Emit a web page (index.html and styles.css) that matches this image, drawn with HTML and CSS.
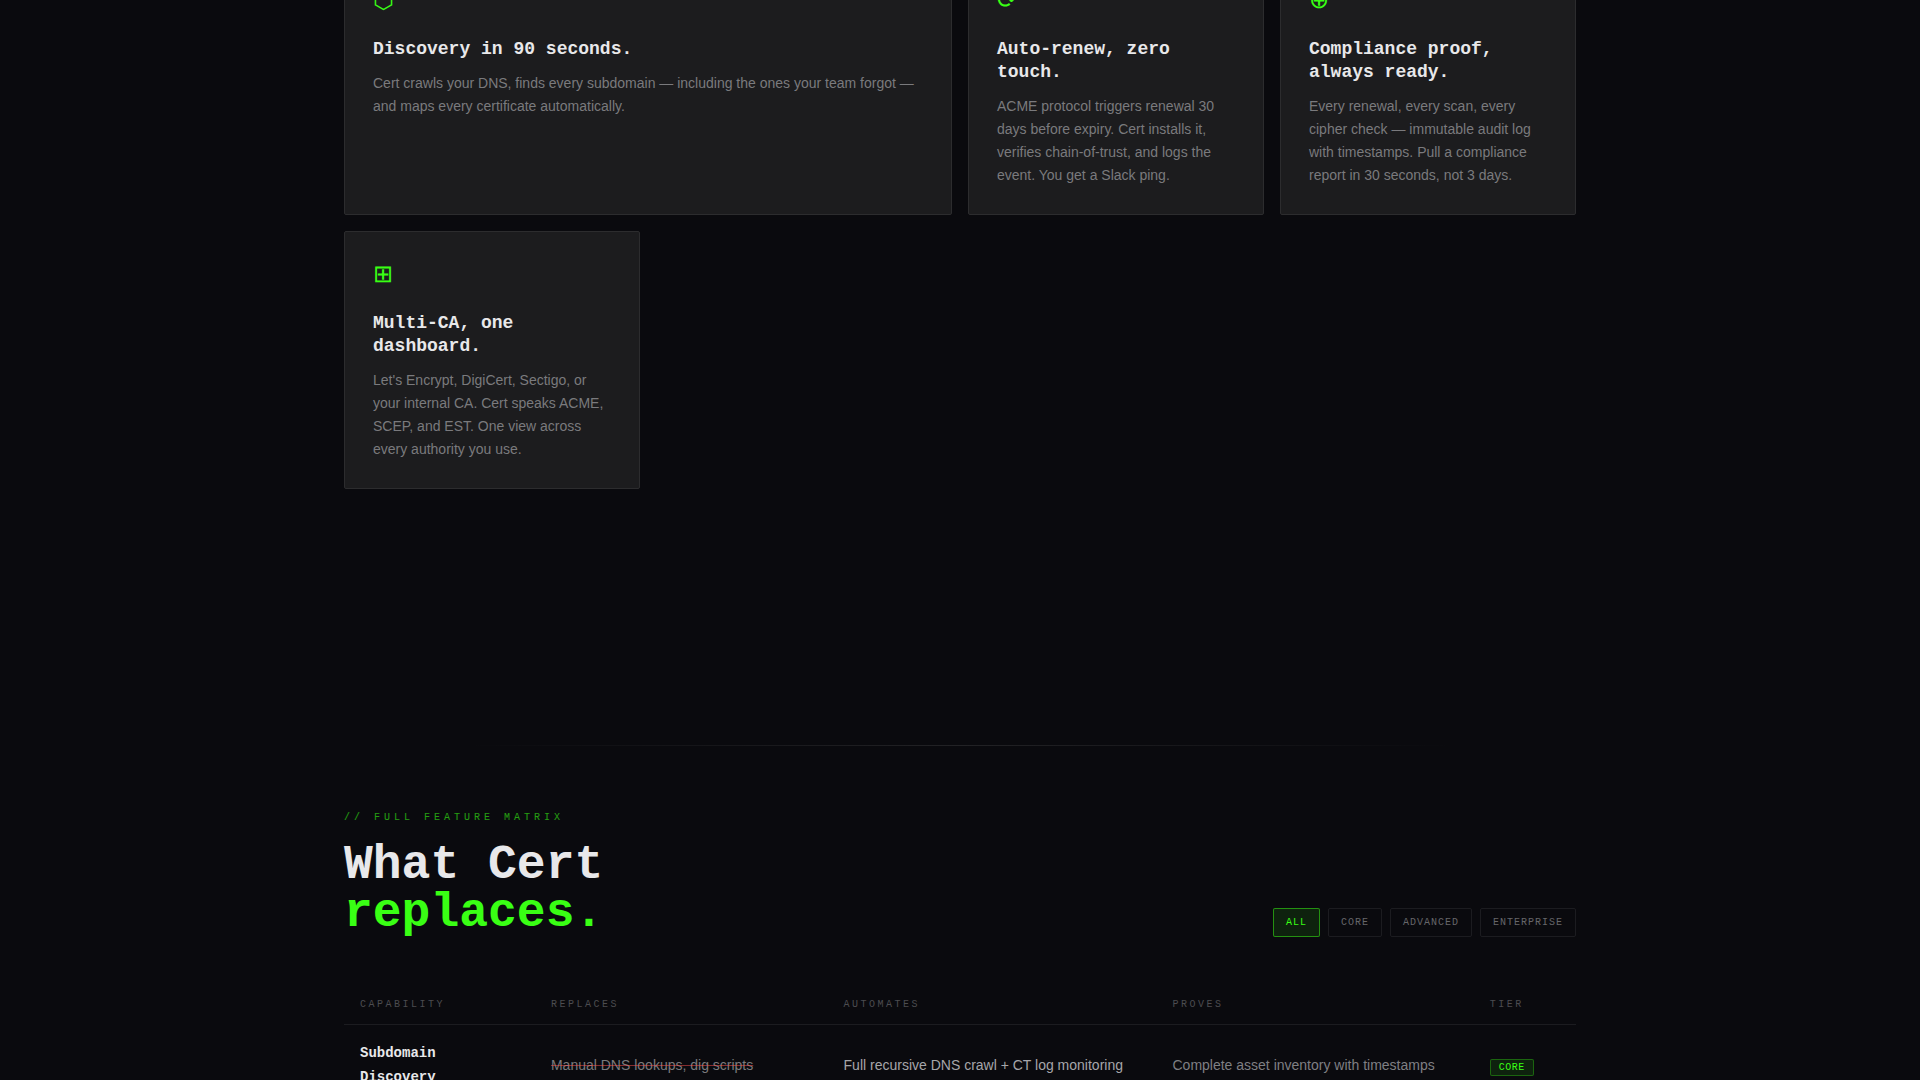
FILE: index.html
```html
<!DOCTYPE html>
<html lang="en">
<head>
  <meta charset="UTF-8">
  <meta name="viewport" content="width=device-width, initial-scale=1.0">
  <title>Cert</title>
  <link rel="stylesheet" href="styles.css">
</head>
<body>
  <section class="container features">
    <div class="bento">
      <article class="card card-wide">
        <div class="card-icon">⬡</div>
        <h3>Discovery in 90 seconds.</h3>
        <p>Cert crawls your DNS, finds every subdomain — including the ones your team forgot — and maps every certificate automatically.</p>
      </article>
      <article class="card">
        <div class="card-icon">⟳</div>
        <h3>Auto-renew, zero touch.</h3>
        <p>ACME protocol triggers renewal 30 days before expiry. Cert installs it, verifies chain-of-trust, and logs the event. You get a Slack ping.</p>
      </article>
      <article class="card">
        <div class="card-icon">⊕</div>
        <h3>Compliance proof, always ready.</h3>
        <p>Every renewal, every scan, every cipher check — immutable audit log with timestamps. Pull a compliance report in 30 seconds, not 3 days.</p>
      </article>
      <article class="card">
        <div class="card-icon">⊞</div>
        <h3>Multi-CA, one dashboard.</h3>
        <p>Let's Encrypt, DigiCert, Sectigo, or your internal CA. Cert speaks ACME, SCEP, and EST. One view across every authority you use.</p>
      </article>
    </div>
  </section>

  <section class="container matrix">
    <div class="divider"></div>
    <p class="label">// FULL FEATURE MATRIX</p>
    <div class="matrix-header">
      <h2>What Cert<br><span class="accent">replaces.</span></h2>
      <div class="filters">
        <button class="filter active" type="button">ALL</button>
        <button class="filter" type="button">CORE</button>
        <button class="filter" type="button">ADVANCED</button>
        <button class="filter" type="button">ENTERPRISE</button>
      </div>
    </div>
    <table>
      <colgroup>
        <col class="col-capability">
        <col class="col-replaces">
        <col class="col-automates">
        <col class="col-proves">
        <col>
      </colgroup>
      <thead>
        <tr>
          <th>CAPABILITY</th>
          <th>REPLACES</th>
          <th>AUTOMATES</th>
          <th>PROVES</th>
          <th>TIER</th>
        </tr>
      </thead>
      <tbody>
        <tr>
          <td class="capability">Subdomain Discovery</td>
          <td class="replaces">Manual DNS lookups, dig scripts</td>
          <td class="automates">Full recursive DNS crawl + CT log monitoring</td>
          <td class="proves">Complete asset inventory with timestamps</td>
          <td><span class="tier">CORE</span></td>
        </tr>
      </tbody>
    </table>
  </section>
</body>
</html>
```

FILE: styles.css
```css
* {
  box-sizing: border-box;
  margin: 0;
  padding: 0;
}
html {
  height: 100%;
  overflow: hidden;
}
body {
  height: 100%;
  overflow: hidden;
  background: #0a0a0e;
  color: #e8e8ea;
  font-family: "Liberation Sans", Arial, sans-serif;
  font-size: 14px;
  line-height: 24px;
}
.container {
  max-width: 1280px;
  margin: 0 auto;
  padding: 0 24px;
}

/* Feature cards */
.features {
  margin-top: -43px;
  padding-bottom: 256px;
}
.bento {
  display: grid;
  grid-template-columns: repeat(4, 1fr);
  gap: 16px;
}
.card {
  padding: 28px 28px 27px;
  background: #1c1c1e;
  border: 1px solid #2c2c2e;
  border-radius: 2px;
}
.card-wide {
  grid-column: span 2;
}
.card-icon {
  margin-bottom: 24px;
  color: #39ff14;
  font-size: 24px;
  line-height: 28px;
}
.card h3 {
  margin-bottom: 11px;
  font-family: "Liberation Mono", monospace;
  font-size: 18px;
  font-weight: 700;
  line-height: 23px;
}
.card p {
  color: #7a7a7d;
  line-height: 23px;
}

/* Feature matrix */
.divider {
  height: 1px;
  margin: 0 10% 64px;
  background: linear-gradient(90deg, transparent, #222225, transparent);
}
.label {
  margin-bottom: 15px;
  color: #39ff14;
  font-family: "Liberation Mono", monospace;
  font-size: 10px;
  letter-spacing: 4px;
  line-height: 16px;
  opacity: 0.6;
}
.matrix-header {
  display: flex;
  justify-content: space-between;
  align-items: flex-end;
  margin-bottom: 48px;
}
.matrix-header h2 {
  font-family: "Liberation Mono", monospace;
  font-size: 48px;
  font-weight: 700;
  line-height: 48px;
}
.accent {
  color: #39ff14;
}
.filters {
  display: flex;
  gap: 8px;
}
.filter {
  padding: 8px 12px;
  background: transparent;
  border: 1px solid #1c1c20;
  border-radius: 2px;
  color: #66666a;
  font-family: "Liberation Mono", monospace;
  font-size: 10px;
  letter-spacing: 1px;
  line-height: 11px;
  cursor: pointer;
}
.filter.active {
  background: rgba(57, 255, 20, 0.1);
  border-color: rgba(57, 255, 20, 0.5);
  color: #39ff14;
}
table {
  width: 100%;
  border-collapse: collapse;
  table-layout: fixed;
}
.col-capability {
  width: 15.5%;
}
.col-replaces {
  width: 23.75%;
}
.col-automates {
  width: 26.7%;
}
.col-proves {
  width: 25.75%;
}
th {
  padding: 12px 16px 11px;
  border-bottom: 1px solid #1c1c20;
  color: #4c4c50;
  font-family: "Liberation Mono", monospace;
  font-size: 10px;
  font-weight: 400;
  letter-spacing: 0.25em;
  line-height: 16px;
  text-align: left;
}
td {
  padding: 16px;
  vertical-align: middle;
}
.capability {
  font-family: "Liberation Mono", monospace;
  font-weight: 700;
}
.replaces {
  color: #7a7a7d;
  text-decoration: line-through;
  text-decoration-color: rgba(255, 80, 80, 0.5);
}
.automates {
  color: #a6a6aa;
}
.proves {
  color: #7f7f83;
}
.tier {
  display: inline-block;
  padding: 2px 8px;
  background: rgba(57, 255, 20, 0.1);
  border: 1px solid rgba(57, 255, 20, 0.3);
  border-radius: 2px;
  color: #39ff14;
  font-family: "Liberation Mono", monospace;
  font-size: 10px;
  letter-spacing: 0.05em;
  line-height: 11px;
}
```
